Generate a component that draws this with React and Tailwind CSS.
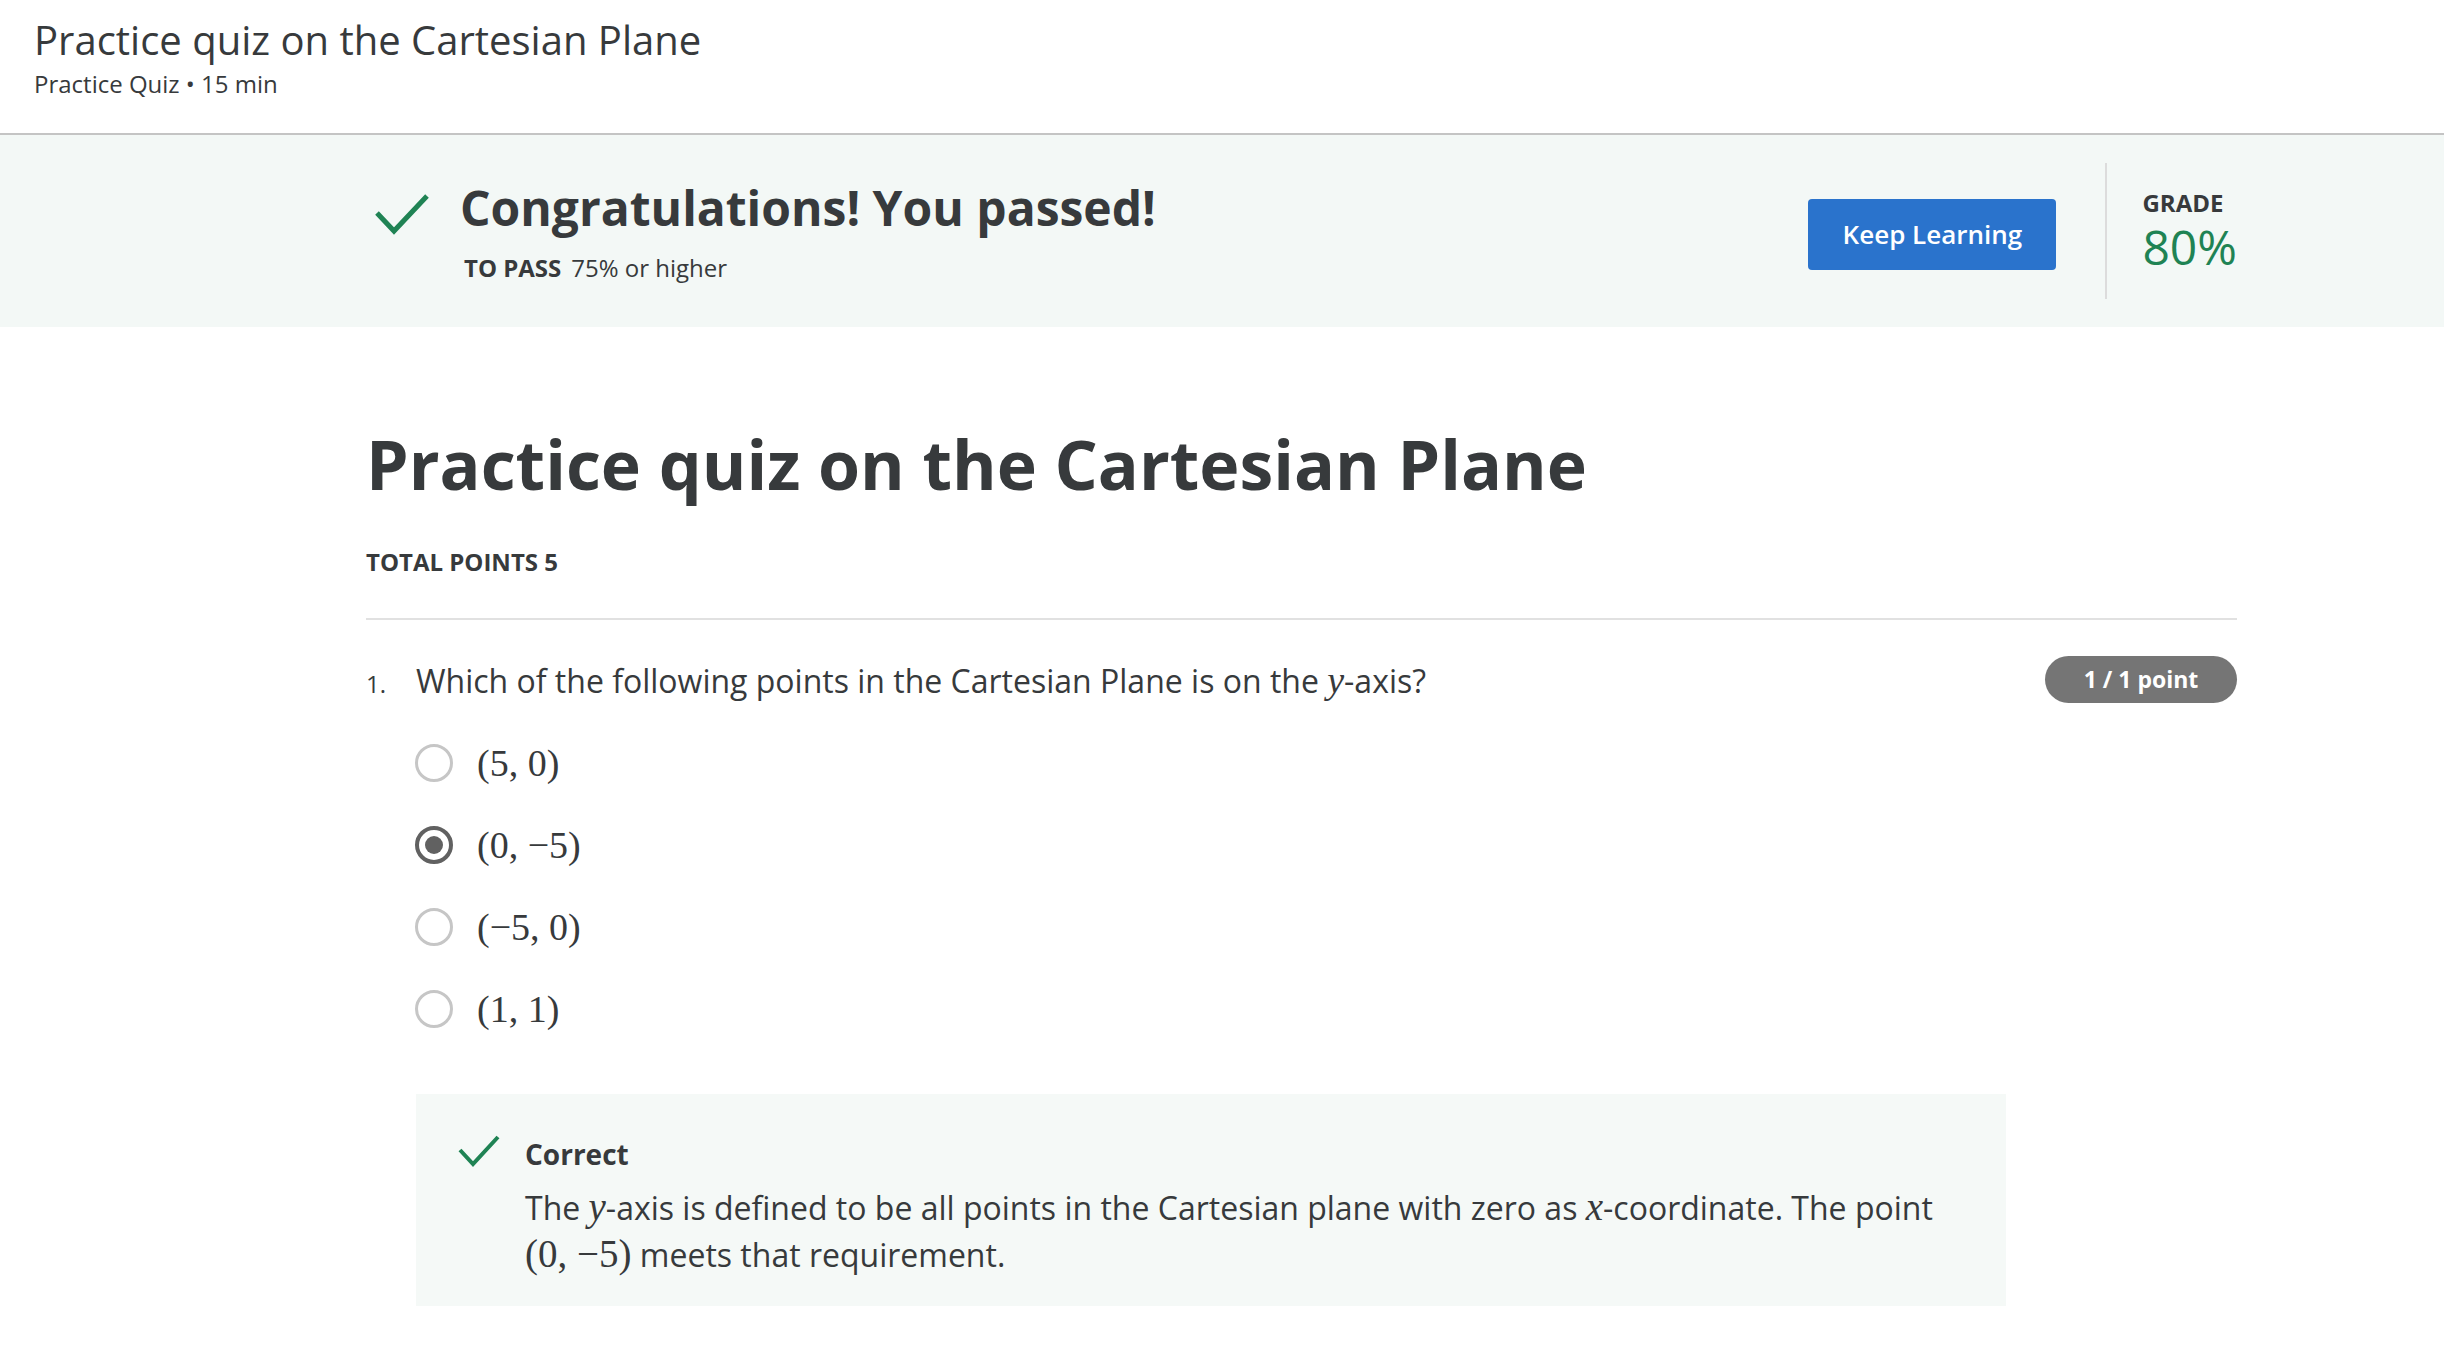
import React from "react";

function Check({ className, w, h, points, sw }) {
  return (
    <svg className={className} width={w} height={h} viewBox={`0 0 ${w} ${h}`} fill="none">
      <polyline points={points} stroke="#1f8354" strokeWidth={sw} fill="none" strokeLinecap="butt" strokeLinejoin="miter" />
    </svg>
  );
}

function Radio({ selected }) {
  if (selected) {
    return (
      <div className="w-[38px] h-[38px] rounded-full border-[4px] border-[#616161] flex items-center justify-center shrink-0">
        <div className="w-[18px] h-[18px] rounded-full bg-[#616161]" />
      </div>
    );
  }
  return <div className="w-[38px] h-[38px] rounded-full border-[3px] border-[#c6c6c6] shrink-0" />;
}

const options = [
  { label: "(5, 0)", selected: false },
  { label: "(0, \u22125)", selected: true },
  { label: "(\u22125, 0)", selected: false },
  { label: "(1, 1)", selected: false },
];

export default function App() {
  return (
    <div className="min-h-[1360px] bg-white text-[#373a3c] font-['Open_Sans',sans-serif]">
      {/* Header */}
      <header className="pl-[34px] pt-[16px] pb-[33px] border-b-2 border-[#c4c4c4]">
        <h1 className="text-[40px] leading-[48px] font-normal">Practice quiz on the Cartesian Plane</h1>
        <div className="mt-[4px] text-[24px] leading-[32px]">Practice Quiz • 15 min</div>
      </header>

      {/* Banner */}
      <section className="bg-[#f3f8f6] h-[192px]">
        <div className="ml-[366px] w-[1871px] h-full flex items-center">
          <div className="flex items-start mt-[1px] flex-1">
            <Check className="ml-[9px] mt-[14px] shrink-0" w={54} h={42} points="2,20 19,38 52,3" sw={5} />
            <div className="ml-[31px]">
              <div className="text-[48px] leading-[58px] font-bold">Congratulations! You passed!</div>
              <div className="mt-[15px] flex items-baseline text-[24px] leading-[32px] pl-[4px]">
                <span className="font-bold">TO PASS</span>
                <span className="ml-[10px]">75% or higher</span>
              </div>
            </div>
          </div>
          <button className="mt-[6px] w-[248px] h-[71px] rounded-[4px] bg-[#2a73cc] text-white text-[26px] font-semibold">
            Keep Learning
          </button>
          <div className="ml-[49px] w-[2px] h-[136px] bg-[#dcdcdc]" />
          <div className="ml-[35px] flex flex-col">
            <div className="text-[24px] leading-[28px] font-bold">GRADE</div>
            <div className="mt-[4px] text-[48px] leading-[52px] text-[#1f8354]">80%</div>
          </div>
        </div>
      </section>

      {/* Main */}
      <main className="ml-[366px] w-[1871px] pt-[97px]">
        <h2 className="text-[68px] leading-[80px] font-bold">Practice quiz on the Cartesian Plane</h2>
        <div className="mt-[42px] text-[24px] leading-[32px] font-bold">TOTAL POINTS 5</div>
        <div className="mt-[40px] h-[2px] bg-[#e1e1e1]" />

        <div className="mt-[33px] flex justify-between items-start">
          <div className="mt-[6px] flex items-baseline">
            <span className="w-[50px] text-[24px] leading-[44px]">1.</span>
            <span className="text-[32px] leading-[44px]">
              Which of the following points in the Cartesian Plane is on the{" "}
              <span className="font-['Liberation_Serif',serif] italic text-[38px] leading-none">y</span>-axis?
            </span>
          </div>
          <div className="mt-[3px] w-[192px] h-[47px] rounded-full bg-[#757575] text-white text-[23px] font-bold flex items-center justify-center">
            1 / 1 point
          </div>
        </div>

        <div className="mt-[16px] pl-[49px] flex flex-col">
          {options.map((o) => (
            <div key={o.label} className="h-[82px] flex items-center">
              <Radio selected={o.selected} />
              <span className="ml-[24px] font-['Liberation_Serif',serif] text-[38px] leading-none">{o.label}</span>
            </div>
          ))}
        </div>

        <div className="mt-[44px] ml-[50px] w-[1590px] bg-[#f5f9f7] pt-[42px] pb-[28px] pl-[42px] pr-[40px] flex items-start">
          <Check className="shrink-0 mt-[-1px]" w={42} h={32} points="2,15 15,29 40,2" sw={4} />
          <div className="ml-[25px]">
            <div className="text-[28px] leading-[36px] font-bold">Correct</div>
            <div className="mt-[12px] text-[32px] leading-[47px]">
              <div className="whitespace-nowrap">
                The <span className="font-['Liberation_Serif',serif] italic text-[39px] leading-none">y</span>-axis is defined to be all points in the Cartesian plane with zero as{" "}
                <span className="font-['Liberation_Serif',serif] italic text-[39px] leading-none">x</span>-coordinate. The point
              </div>
              <div className="whitespace-nowrap">
                <span className="font-['Liberation_Serif',serif] text-[39px] leading-none">(0, {"\u2212"}5)</span> meets that requirement.
              </div>
            </div>
          </div>
        </div>
      </main>
    </div>
  );
}
